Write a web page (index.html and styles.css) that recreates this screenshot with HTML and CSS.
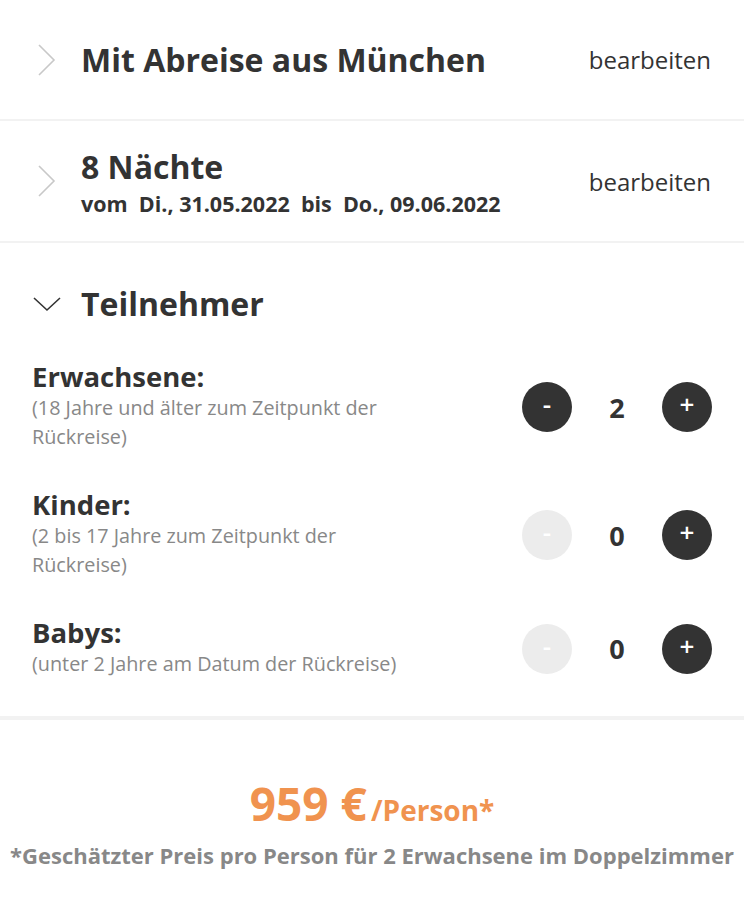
FILE: index.html
```html
<!DOCTYPE html>
<html lang="de">
<head>
  <meta charset="UTF-8">
  <meta name="viewport" content="width=device-width, initial-scale=1.0">
  <title>Reise buchen</title>
  <link rel="stylesheet" href="styles.css">
</head>
<body>
  <!-- Abreiseort -->
  <div class="step">
    <svg class="chevron" width="20" height="34" viewBox="0 0 20 34"><path d="M2 2 L17 17 L2 32" fill="none" stroke="#c8c8c8" stroke-width="1.6"/></svg>
    <div class="step-body">
      <div class="step-title">Mit Abreise aus München</div>
    </div>
    <a class="edit" href="#">bearbeiten</a>
  </div>

  <!-- Dauer -->
  <div class="step">
    <svg class="chevron" width="20" height="34" viewBox="0 0 20 34"><path d="M2 2 L17 17 L2 32" fill="none" stroke="#c8c8c8" stroke-width="1.6"/></svg>
    <div class="step-body">
      <div class="step-title">8 Nächte</div>
      <div class="step-sub">vom&nbsp; Di., 31.05.2022&nbsp; bis&nbsp; Do., 09.06.2022</div>
    </div>
    <a class="edit" href="#">bearbeiten</a>
  </div>

  <!-- Teilnehmer -->
  <div class="participants">
    <div class="participants-head">
      <svg class="chevron-down" width="30" height="18" viewBox="0 0 30 18"><path d="M2 3 L15 15 L28 3" fill="none" stroke="#333" stroke-width="1.6"/></svg>
      <div class="step-title">Teilnehmer</div>
    </div>

    <div class="person">
      <div class="person-text">
        <div class="person-label">Erwachsene:</div>
        <div class="person-hint">(18 Jahre und älter zum Zeitpunkt der Rückreise)</div>
      </div>
      <div class="counter">
        <button class="round">-</button>
        <span class="count">2</span>
        <button class="round">+</button>
      </div>
    </div>

    <div class="person">
      <div class="person-text">
        <div class="person-label">Kinder:</div>
        <div class="person-hint">(2 bis 17 Jahre zum Zeitpunkt der Rückreise)</div>
      </div>
      <div class="counter">
        <button class="round disabled">-</button>
        <span class="count">0</span>
        <button class="round">+</button>
      </div>
    </div>

    <div class="person">
      <div class="person-text">
        <div class="person-label">Babys:</div>
        <div class="person-hint">(unter 2 Jahre am Datum der Rückreise)</div>
      </div>
      <div class="counter">
        <button class="round disabled">-</button>
        <span class="count">0</span>
        <button class="round">+</button>
      </div>
    </div>
  </div>

  <!-- Preis -->
  <div class="price-box">
    <div class="price"><span class="amount">959 €</span> <span class="per">/Person*</span></div>
    <div class="note">*Geschätzter Preis pro Person für 2 Erwachsene im Doppelzimmer</div>
  </div>
</body>
</html>
```

FILE: styles.css
```css
* {
  box-sizing: border-box;
}
body {
  margin: 0;
  background: #fff;
  color: #333;
  font-family: 'Open Sans', sans-serif;
}
.step {
  display: flex;
  align-items: center;
  height: 121px;
  padding: 0 33px 0 37px;
  border-bottom: 2px solid #f2f2f2;
}
.step + .step {
  height: 122px;
}
.chevron {
  flex: none;
  margin-right: 24px;
}
.step-body {
  flex: 1;
}
.step-title {
  font-size: 32px;
  font-weight: 700;
  line-height: 40px;
}
.step + .step .step-body {
  margin-top: 4px;
}
.step-sub {
  font-size: 21.5px;
  font-weight: 700;
  line-height: 30px;
  margin-top: 2px;
}
.edit {
  color: #333;
  text-decoration: none;
  font-size: 24px;
}
.participants {
  padding: 41px 32px 38px 32px;
  border-bottom: 4px solid #f2f2f2;
}
.participants-head {
  display: flex;
  align-items: center;
  margin-bottom: 37px;
}
.chevron-down {
  margin-right: 19px;
}
.person {
  display: flex;
  align-items: center;
  justify-content: space-between;
  margin-bottom: 38px;
}
.person:last-child {
  margin-bottom: 0;
}
.person-text {
  width: 385px;
}
.person-label {
  font-size: 27.5px;
  font-weight: 700;
  line-height: 32px;
}
.person-hint {
  font-size: 19.8px;
  color: #888;
  line-height: 29px;
}
.counter {
  display: flex;
  align-items: center;
  margin-top: 2px;
}
.count {
  width: 90px;
  text-align: center;
  font-size: 27px;
  font-weight: 700;
}
.round {
  width: 50px;
  height: 50px;
  border: none;
  border-radius: 50%;
  background: #333;
  color: #fff;
  font-family: 'Open Sans', sans-serif;
  font-size: 26px;
  font-weight: 600;
  line-height: 1;
  padding: 0 0 6px 0;
  cursor: pointer;
}
.round.disabled {
  background: #ececec;
  color: #fff;
}
.price-box {
  text-align: center;
  padding-top: 58px;
}
.price {
  color: #f0934f;
  font-weight: 700;
  line-height: 50px;
}
.amount {
  font-size: 46px;
}
.per {
  font-size: 28px;
}
.note {
  color: #888;
  font-weight: 700;
  font-size: 22px;
  line-height: 30px;
}
```
